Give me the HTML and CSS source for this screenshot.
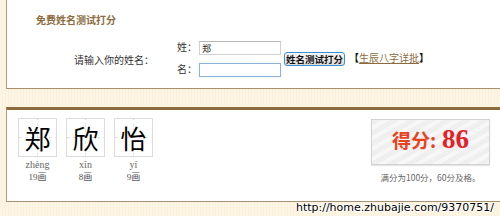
FILE: index.html
```html
<!DOCTYPE html>
<html lang="zh-CN">
  <head>
    <meta charset="UTF-8"/>
    <title>免费姓名测试打分</title>
    <link rel="stylesheet" href="styles.css">
  </head>
  <body>
    <div class="page">
      <div class="panel panel_form">
        <p class="panel_title">免费姓名测试打分</p>
        <div class="nameForm">
          <p class="nameForm_label">请输入你的姓名：</p>
          <div class="nameForm_fields">
            <label class="nameForm_row">姓：<input class="nameForm_input" type="text" value="郑"></label>
            <label class="nameForm_row">名：<input class="nameForm_input nameForm_input_focus" type="text" value=""></label>
          </div>
          <button class="nameForm_button">姓名测试打分</button>
          <span class="nameForm_more"><b>【</b><a href="#">生辰八字详批</a><b>】</b></span>
        </div>
      </div>

      <div class="panel panel_result">
        <div class="chars">
          <div class="chars_item">
            <div class="chars_box">郑</div>
            <p class="chars_pinyin">zhèng</p>
            <p class="chars_strokes">19画</p>
          </div>
          <div class="chars_item">
            <div class="chars_box">欣</div>
            <p class="chars_pinyin">xīn</p>
            <p class="chars_strokes">8画</p>
          </div>
          <div class="chars_item">
            <div class="chars_box">怡</div>
            <p class="chars_pinyin">yí</p>
            <p class="chars_strokes">9画</p>
          </div>
        </div>
        <div class="score">
          <div class="score_box">
            <span class="score_label">得分:</span>
            <span class="score_value">86</span>
          </div>
          <p class="score_note">满分为100分，60分及格。</p>
        </div>
      </div>

      <div class="panel panel_next"></div>
    </div>
    <div class="watermark">http://home.zhubajie.com/9370751/</div>
  </body>
</html>
```

FILE: styles.css
```css
html {
  overflow: hidden;
}
body {
  margin: 0;
  overflow: hidden;
  height: 216px;
  font-family: "Liberation Sans", "Noto Sans CJK SC", sans-serif;
  font-size: 10px;
  color: #333;
  background-color: #fcf5e3;
  background-image: repeating-linear-gradient(90deg, #fcf5e3 0px, #fcf5e3 2px, #faf0db 2px, #faf0db 3px);
}
p {
  margin: 0;
}
.page {
  width: 494px;
  margin-left: 6px;
}
.panel {
  background-color: #fff;
  border-left: 1px solid #b39e78;
  border-bottom: 1px solid #a89070;
}
.panel_form {
  height: 88px;
}
  .panel_title {
    padding: 15px 0 0 29px;
    font-size: 10px;
    font-weight: bold;
    color: #8c6b3e;
    line-height: 12px;
  }
  .nameForm {
    display: flex;
    align-items: center;
    margin: 14px 0 0 67px;
  }
  .nameForm_label {
    width: 103px;
    font-size: 10px;
    line-height: 12px;
    margin-top: 3px;
  }
  .nameForm_fields {
    display: flex;
    flex-direction: column;
    gap: 8px;
  }
  .nameForm_row {
    display: flex;
    align-items: center;
    font-size: 10px;
    line-height: 12px;
  }
  .nameForm_input {
    width: 82px;
    height: 14px;
    box-sizing: border-box;
    margin: 0 0 0 2px;
    padding: 0 2px;
    border: 1px solid #d0d0d0;
    border-top-color: #b8b8b8;
    font-family: "Noto Sans CJK SC", sans-serif;
    font-size: 9px;
    color: #222;
  }
  .nameForm_input_focus {
    border-color: #8fb4d9;
    box-shadow: 0 0 1px #a9c8e8;
  }
  .nameForm_button {
    height: 14px;
    margin: 0 0 0 3px;
    padding: 0 1px;
    border: 1px solid #3d8fd1;
    border-radius: 3px;
    background: linear-gradient(#f6f6f6, #dcdcdc);
    font-family: "Noto Sans CJK SC", sans-serif;
    font-size: 9.5px;
    font-weight: bold;
    line-height: 12px;
    color: #111;
  }
  .nameForm_more {
    margin-left: 4px;
    font-size: 10px;
    line-height: 12px;
    color: #111;
  }
  .nameForm_more a {
    color: #8c6b3e;
  }

.panel_result {
  display: flex;
  justify-content: space-between;
  margin-top: 18px;
  height: 83px;
  padding: 8px 10px 0 11px;
  border-top: 3px solid #8c6b3e;
}
  .chars {
    display: flex;
    gap: 9px;
  }
  .chars_item {
    width: 39px;
    text-align: center;
  }
  .chars_box {
    width: 39px;
    height: 39px;
    box-sizing: border-box;
    border: 1px solid #dcdcdc;
    background-image:
      repeating-linear-gradient(90deg, #e2e2e2 0px, #e2e2e2 3px, transparent 3px, transparent 6px),
      repeating-linear-gradient(0deg, #e2e2e2 0px, #e2e2e2 3px, transparent 3px, transparent 6px);
    background-size: 100% 1px, 1px 100%;
    background-position: 0 18px, 18px 0;
    background-repeat: no-repeat;
    font-family: "Noto Sans CJK SC", serif;
    font-size: 26px;
    line-height: 37px;
    color: #000;
  }
  .chars_pinyin {
    margin-top: 2px;
    font-family: "Liberation Serif", serif;
    font-size: 10px;
    line-height: 12px;
    color: #666;
  }
  .chars_strokes {
    font-family: "Liberation Serif", "Noto Sans CJK SC", serif;
    font-size: 9px;
    line-height: 12px;
    color: #555;
  }
  .score {
    display: flex;
    flex-direction: column;
    align-items: center;
    padding-top: 1px;
  }
  .score_box {
    display: flex;
    align-items: baseline;
    justify-content: center;
    width: 119px;
    height: 46px;
    box-sizing: border-box;
    padding-top: 4px;
    border: 1px solid #d3d3d3;
    box-shadow: 0 1px 1px #e4e4e4;
    background-color: #f2f2f2;
    background-image: repeating-linear-gradient(150deg, #efefef 0px, #efefef 5px, #f7f7f7 5px, #f7f7f7 9px);
  }
  .score_label {
    font-family: "Noto Sans CJK SC", sans-serif;
    font-size: 19px;
    font-weight: bold;
    color: #e8431e;
  }
  .score_value {
    margin-left: 6px;
    font-family: "Liberation Serif", serif;
    font-size: 27px;
    font-weight: bold;
    color: #e41f28;
  }
  .score_note {
    margin-top: 6px;
    font-family: "Noto Sans CJK SC", sans-serif;
    font-size: 8.5px;
    line-height: 12px;
    color: #666;
  }

.panel_next {
  margin-top: 18px;
  height: 0;
  border-top: 3px solid #8c6b3e;
  border-bottom: none;
}

.watermark {
  position: absolute;
  right: 6px;
  top: 201px;
  font-family: "DejaVu Sans", sans-serif;
  font-size: 11px;
  line-height: 14px;
  color: #000;
  text-shadow: 1px 0 0 #fff, -1px 0 0 #fff, 0 1px 0 #fff, 0 -1px 0 #fff;
}
```
